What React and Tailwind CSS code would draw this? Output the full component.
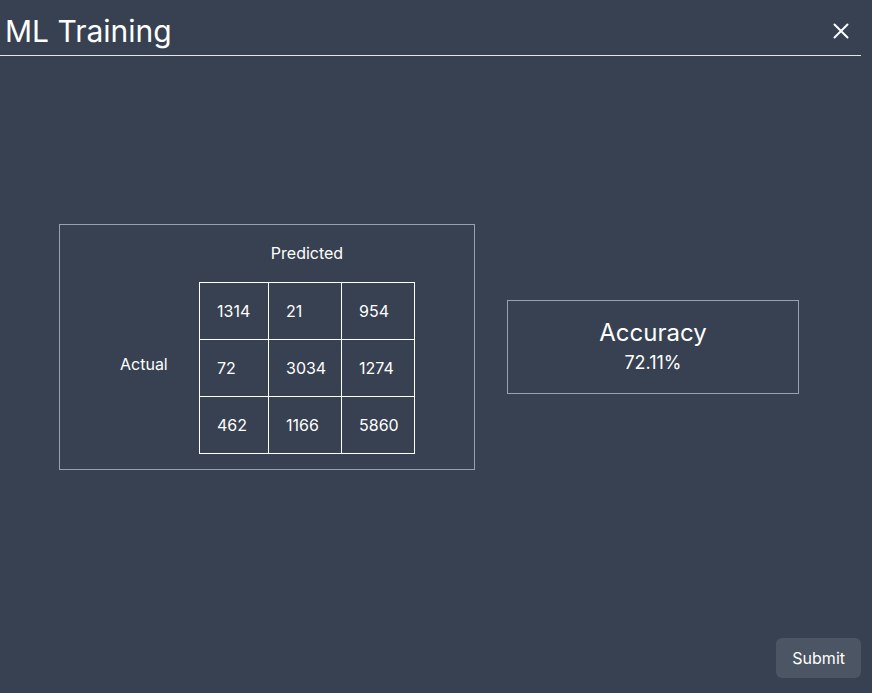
import React from 'react'

const matrix = [
  [1314, 21, 954],
  [72, 3034, 1274],
  [462, 1166, 5860],
]

export default function App() {
  return (
    <div
      className="w-full h-[693px] bg-[#374151] text-white flex flex-col pr-[11px] pb-[15px]"
      style={{ fontFamily: 'Inter, "Noto Sans", sans-serif' }}
    >
      {/* Header */}
      <div className="h-[56px] flex items-center justify-between border-b border-gray-200 pl-[5px] pt-[6px] shrink-0">
        <h1 className="text-3xl leading-9">ML Training</h1>
        <button className="w-[28px] h-[28px] flex items-center justify-center mr-[6px]">
          <svg width="16" height="16" viewBox="0 0 16 16" fill="none" stroke="white" strokeWidth="2" strokeLinecap="round">
            <path d="M1.5 1.5 L14.5 14.5 M14.5 1.5 L1.5 14.5" />
          </svg>
        </button>
      </div>

      {/* Content */}
      <div className="flex-1 flex items-center justify-center gap-8 pr-[3px]">
        {/* Confusion matrix */}
        <div className="border border-gray-400 pt-4 pb-[15px] pl-[60px] pr-[59px] w-[416px] flex items-end justify-between">
          <div className="leading-6 mb-[78px]">Actual</div>
          <div className="flex flex-col items-center">
            <div className="leading-6">Predicted</div>
            <table className="border-collapse border border-white mt-[17px] table-fixed w-[216px]">
              <colgroup>
                <col className="w-[69px]" />
                <col className="w-[73px]" />
                <col className="w-[73px]" />
              </colgroup>
              <tbody>
                {matrix.map((row, i) => (
                  <tr key={i}>
                    {row.map((v, j) => (
                      <td key={j} className="border border-white pl-[17px] pr-2 py-4 leading-6 text-left">
                        {v}
                      </td>
                    ))}
                  </tr>
                ))}
              </tbody>
            </table>
          </div>
        </div>

        {/* Accuracy */}
        <div className="border border-gray-400 w-[292px] py-4 text-center">
          <div className="text-2xl leading-8">Accuracy</div>
          <div className="text-lg leading-7">72.11%</div>
        </div>
      </div>

      {/* Footer */}
      <div className="flex justify-end shrink-0">
        <button className="bg-[#4b5563] rounded-md px-4 py-2 leading-6 text-white">Submit</button>
      </div>
    </div>
  )
}
